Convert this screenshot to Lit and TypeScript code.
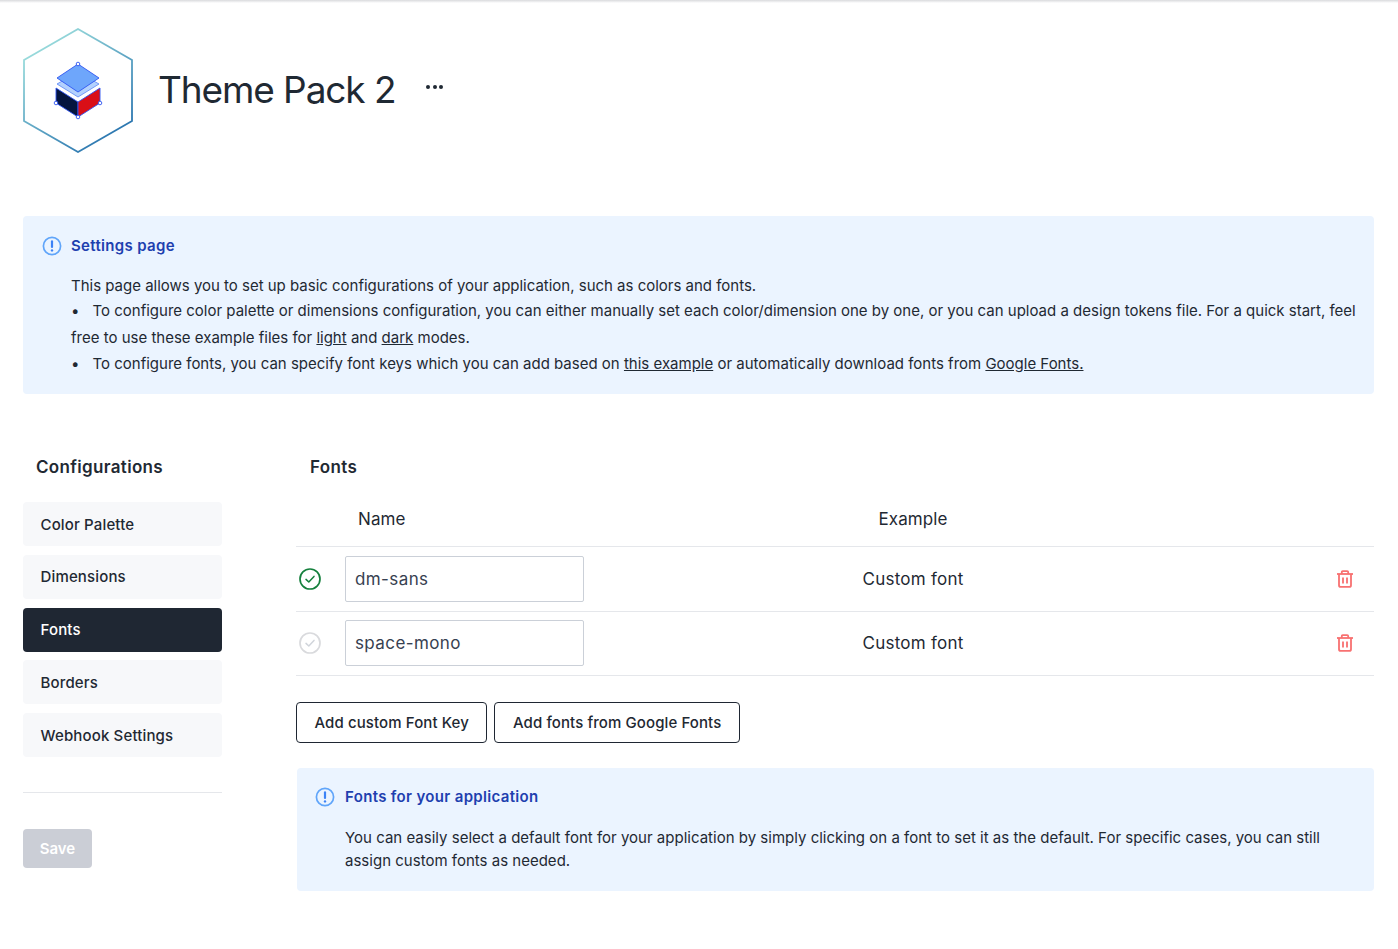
import { LitElement, html, css, svg } from 'lit';
import { customElement } from 'lit/decorators.js';

const infoIcon = html`<svg class="info-icon" viewBox="0 0 20 20" width="20" height="20" fill="none">
    <circle cx="10" cy="10" r="8.6" stroke="#60a5fa" stroke-width="1.7" />
    <path d="M10 5.4v5.6" stroke="#3b82f6" stroke-width="2.2" stroke-linecap="round" />
    <circle cx="10" cy="14.4" r="1.2" fill="#3b82f6" />
</svg>`;

const trashIcon = html`<svg viewBox="0 0 18 18" width="18" height="18" fill="none" stroke="#f87171" stroke-width="1.8">
    <path d="M1 4h16" />
    <path d="M5.8 4V2.2c0-.6.3-1 1-1h4.4c.7 0 1 .4 1 1V4" />
    <path d="M3 4v11.2c0 1 .7 1.7 1.7 1.7h8.6c1 0 1.7-.7 1.7-1.7V4" />
    <path d="M7 7.4v6M11 7.4v6" />
</svg>`;

const checkIcon = (active: boolean) => html`<svg viewBox="0 0 24 24" width="24" height="24" fill="none">
    <circle cx="12" cy="12" r="10" stroke=${active ? '#15803d' : '#d9dadd'} stroke-width="1.7" />
    <path d="M8 12.4l2.8 2.6L16 9.4" stroke=${active ? '#15803d' : '#d1d5db'} stroke-width="1.5" stroke-linecap="round" stroke-linejoin="round" />
</svg>`;

const logo = svg`
    <defs>
        <linearGradient id="hex" x1="0.15" y1="0" x2="0.85" y2="1">
            <stop offset="0" stop-color="#a5e6e0" />
            <stop offset="1" stop-color="#1f6bab" />
        </linearGradient>
    </defs>
    <path d="M55 1 L109 32 L109 93 L55 124 L1 93 L1 32 Z" fill="#fff" stroke="url(#hex)" stroke-width="1.8" />
    <path d="M33 60 L55 74 L55 89 L33 75 Z" fill="#04153f" stroke="#2f55f0" stroke-width="0.9" />
    <path d="M77 60 L55 74 L55 89 L77 75 Z" fill="#d90f17" stroke="#2f55f0" stroke-width="0.9" />
    <path d="M34 56 L55 44 L76 56 L55 69 Z" fill="#b3d1fd" stroke="#5b86f7" stroke-width="0.8" />
    <path d="M34 50 L55 36 L76 50 L55 64 Z" fill="#6ea6fb" stroke="#2f55f0" stroke-width="0.9" />
    <g fill="#fff" stroke="#2f55f0" stroke-width="0.9">
        <circle cx="55" cy="36" r="1.8" />
        <circle cx="33" cy="75" r="1.8" />
        <circle cx="77" cy="75" r="1.8" />
        <circle cx="55" cy="89" r="1.8" />
    </g>
`;

const menu = ['Color Palette', 'Dimensions', 'Fonts', 'Borders', 'Webhook Settings'];
const fonts = [
    { key: 'dm-sans', active: true },
    { key: 'space-mono', active: false },
];

@customElement('app-root')
export class AppRoot extends LitElement {
    static styles = css`
        :host {
            display: block;
            height: 949px;
            overflow: hidden;
            box-sizing: border-box;
            padding: 0 24px 0 23px;
            background: linear-gradient(#d9dadd, #fff 3px);
            color: #1f2933;
            font-family: 'Inter', 'Noto Sans', sans-serif;
            font-size: 15px;
            letter-spacing: -0.01px;
        }

        .header {
            display: flex;
            align-items: flex-start;
            padding-top: 28px;
            height: 216px;
            box-sizing: border-box;
        }

        .logo {
            width: 110px;
            height: 125px;
            flex: none;
        }

        h1 {
            margin: 36px 0 0 25px;
            font-size: 37px;
            line-height: 52px;
            font-weight: 400;
            letter-spacing: -1.1px;
            color: #1f2933;
        }

        .dots {
            display: flex;
            gap: 2.5px;
            margin: 57px 0 0 31px;
        }

        .dots span {
            width: 4px;
            height: 4px;
            border-radius: 50%;
            background: #1f2933;
        }

        .alert {
            background: #ebf4ff;
            border-radius: 4px;
            box-sizing: border-box;
        }

        .alert-head {
            display: flex;
            align-items: center;
            gap: 9px;
            color: #1e40af;
            font-weight: 600;
            line-height: 20px;
            letter-spacing: 0.33px;
        }

        .page-alert {
            height: 178px;
            padding: 19.5px 14px 0 19px;
        }

        .page-alert .body {
            margin: 18px 0 0 29px;
            line-height: 26.5px;
        }

        .page-alert .lead {
            line-height: 24.5px;
        }

        .page-alert .bullet {
            display: block;
            letter-spacing: 0px;
        }

        .page-alert .bullet::before {
            content: '•';
            display: inline-block;
            width: 21.5px;
        }

        a {
            color: inherit;
            text-decoration: underline;
        }

        .columns {
            display: flex;
            margin-top: 61px;
        }

        .sidebar {
            width: 199px;
            flex: none;
        }

        h2 {
            margin: 0;
            font-size: 17px;
            line-height: 24px;
            font-weight: 600;
            letter-spacing: 0.33px;
        }

        .sidebar h2 {
            padding-left: 13px;
        }

        .menu {
            display: flex;
            flex-direction: column;
            gap: 8.75px;
            margin-top: 23px;
            padding-bottom: 35px;
            border-bottom: 1px solid #e5e7eb;
        }

        .menu div {
            height: 44px;
            display: flex;
            align-items: center;
            padding-left: 17.5px;
            background: #f7f8fa;
            border-radius: 4px;
            font-weight: 500;
            letter-spacing: 0.15px;
        }

        .menu div.selected {
            background: #1f2733;
            color: #fff;
        }

        .save {
            display: flex;
            align-items: center;
            justify-content: center;
            width: 69px;
            height: 39px;
            margin-top: 36px;
            background: #cbced6;
            color: #fff;
            border-radius: 4px;
            font-weight: 600;
        }

        .content {
            flex: 1;
            margin-left: 74px;
            min-width: 0;
        }

        .content h2 {
            padding-left: 14px;
        }

        .row {
            display: grid;
            grid-template-columns: 49px 239px 658px 1fr;
            align-items: center;
            border-bottom: 1px solid #e5e7eb;
        }

        .row.head {
            height: 68px;
            padding-top: 13px;
            box-sizing: border-box;
            font-size: 17px;
            font-weight: 400;
            letter-spacing: 0.1px;
        }

        .row.head .name {
            padding-left: 13px;
        }

        .row.item {
            height: 64.5px;
            box-sizing: border-box;
        }

        .check {
            display: flex;
            padding-left: 2px;
        }

        .input {
            height: 46px;
            box-sizing: border-box;
            display: flex;
            align-items: center;
            padding-left: 9px;
            border: 1px solid #cbd0d8;
            border-radius: 2px;
            font-size: 17px;
            letter-spacing: 0.4px;
            color: #374151;
        }

        .example {
            text-align: center;
            font-size: 17px;
            letter-spacing: 0.25px;
        }

        .head .example {
            letter-spacing: 0.1px;
        }

        .trash {
            display: flex;
            padding-left: 94px;
        }

        .actions {
            display: flex;
            gap: 7px;
            margin-top: 26px;
        }

        .actions div {
            height: 41px;
            box-sizing: border-box;
            display: flex;
            align-items: center;
            padding: 0 17.5px 1px 17.5px;
            border: 1px solid #1f2733;
            border-radius: 4px;
            font-weight: 500;
            letter-spacing: 0.1px;
        }

        .font-alert {
            margin: 25px 0 0 1px;
            height: 123px;
            padding: 19px 18px 0 18px;
        }

        .font-alert .alert-head {
            gap: 10px;
        }

        .font-alert .body {
            margin: 19px 0 0 30px;
            padding-right: 30px;
            line-height: 23px;
            letter-spacing: 0.01px;
        }
    `;

    render() {
        return html`
            <div class="header">
                <svg class="logo" viewBox="0 0 110 125">${logo}</svg>
                <h1>Theme Pack 2</h1>
                <div class="dots"><span></span><span></span><span></span></div>
            </div>

            <div class="alert page-alert">
                <div class="alert-head">${infoIcon}Settings page</div>
                <div class="body">
                    <div class="lead">This page allows you to set up basic configurations of your application, such as colors and fonts.</div>
                    <span class="bullet">To configure color palette or dimensions configuration, you can either manually set each color/dimension one by one, or you can upload a design tokens file. For a quick start, feel free to use these example files for <a>light</a> and <a>dark</a> modes.</span>
                    <span class="bullet">To configure fonts, you can specify font keys which you can add based on <a>this example</a> or automatically download fonts from <a>Google Fonts.</a></span>
                </div>
            </div>

            <div class="columns">
                <div class="sidebar">
                    <h2>Configurations</h2>
                    <div class="menu">
                        ${menu.map((m) => html`<div class=${m === 'Fonts' ? 'selected' : ''}>${m}</div>`)}
                    </div>
                    <div class="save">Save</div>
                </div>

                <div class="content">
                    <h2>Fonts</h2>
                    <div class="row head">
                        <span></span>
                        <span class="name">Name</span>
                        <span class="example">Example</span>
                        <span></span>
                    </div>
                    ${fonts.map(
                        (f) => html`
                            <div class="row item">
                                <span class="check">${checkIcon(f.active)}</span>
                                <div class="input">${f.key}</div>
                                <span class="example">Custom font</span>
                                <span class="trash">${trashIcon}</span>
                            </div>
                        `,
                    )}
                    <div class="actions">
                        <div>Add custom Font Key</div>
                        <div>Add fonts from Google Fonts</div>
                    </div>
                    <div class="alert font-alert">
                        <div class="alert-head">${infoIcon}Fonts for your application</div>
                        <div class="body">
                            You can easily select a default font for your application by simply clicking on a font to set it as the default. For specific cases, you can still assign custom fonts as needed.
                        </div>
                    </div>
                </div>
            </div>
        `;
    }
}
